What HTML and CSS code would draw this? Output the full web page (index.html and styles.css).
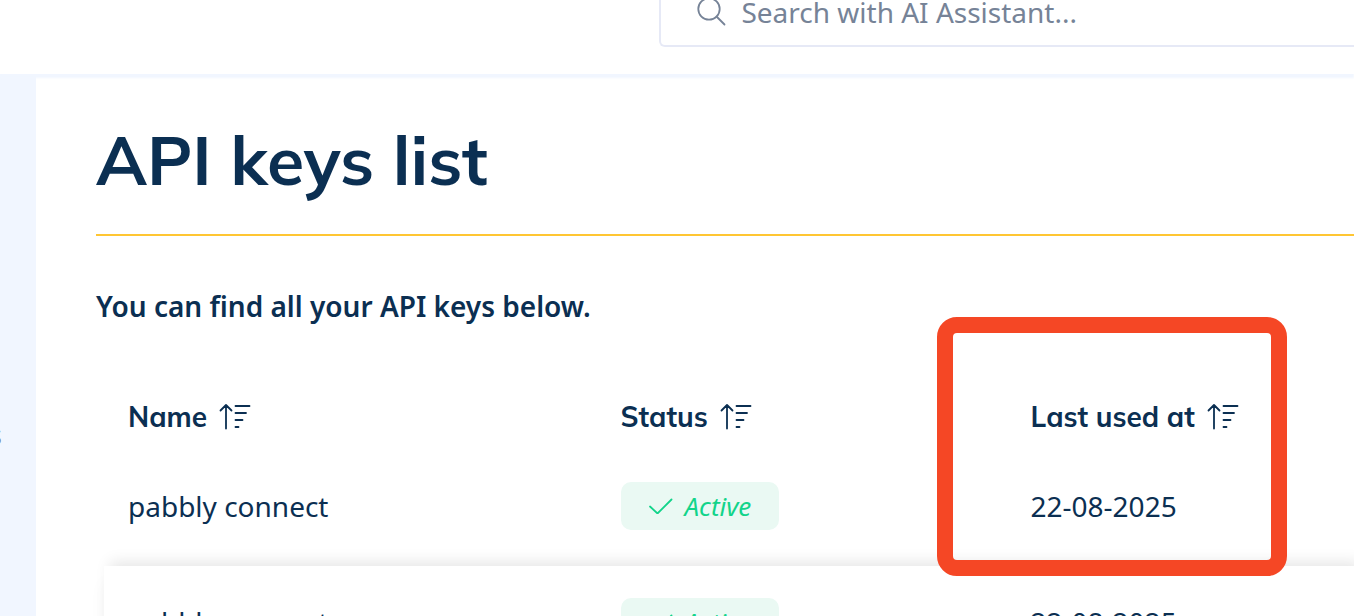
FILE: index.html
```html
<!DOCTYPE html>
<html lang="en">

<head>
    <meta charset="utf-8">
    <title>API keys list</title>
    <link rel="stylesheet" href="styles.css">
</head>

<body>

    <svg class="sprite" aria-hidden="true">
        <symbol id="icon-sort" viewBox="0 0 32 28">
            <path d="M7 2V25.500M1.500 7.500L7 2L12.500 7.500M16.500 3H30.500M16.500 10H27M16.500 17H23.500M16.500 24H19.500" />
        </symbol>
        <symbol id="icon-check" viewBox="0 0 24 16">
            <path d="M1 8.500L8.500 15.500L22.500 1.500" />
        </symbol>
    </svg>

    <header class="topbar">
        <label class="search">
            <svg class="search-icon" viewBox="0 0 30 30" aria-hidden="true">
                <circle cx="12" cy="12" r="10.700" />
                <path d="M19.500 19.500L27.500 27.500" />
            </svg>
            <input class="search-input" type="text" placeholder="Search with AI Assistant..." aria-label="Search">
        </label>
    </header>

    <div class="layout">
        <nav class="sidebar">
            <a class="sidebar-link" href="#">s</a>
        </nav>

        <main class="content">
            <h1 class="title">API keys list</h1>
            <p class="intro">You can find all your API keys below.</p>

            <table class="keys">
                <thead>
                    <tr>
                        <th class="col-name"><button class="sort" type="button">Name <svg class="sort-icon" aria-hidden="true"><use href="#icon-sort" /></svg></button></th>
                        <th class="col-status"><button class="sort" type="button">Status <svg class="sort-icon" aria-hidden="true"><use href="#icon-sort" /></svg></button></th>
                        <th><button class="sort" type="button">Last used at <svg class="sort-icon" aria-hidden="true"><use href="#icon-sort" /></svg></button></th>
                    </tr>
                </thead>
                <tbody>
                    <tr>
                        <td>pabbly connect</td>
                        <td><span class="badge"><svg class="check-icon" aria-hidden="true"><use href="#icon-check" /></svg>Active</span></td>
                        <td>22-08-2025</td>
                    </tr>
                    <tr class="raised">
                        <td>pabbly connect</td>
                        <td><span class="badge"><svg class="check-icon" aria-hidden="true"><use href="#icon-check" /></svg>Active</span></td>
                        <td>22-08-2025</td>
                    </tr>
                </tbody>
            </table>

            <div class="highlight"></div>
        </main>
    </div>

</body>

</html>
```
FILE: styles.css
```css
* {
    box-sizing: border-box;
}

html,
body {
    height: 100%;
}

body {
    display: flex;
    flex-direction: column;
    margin: 0;
    overflow: hidden;
    background: #fff;
    color: #0b2f52;
    font-family: "Noto Sans", sans-serif;
    font-size: 28px;
    line-height: 40px;
}

svg {
    fill: none;
    stroke: currentColor;
    stroke-width: 1.8px;
    stroke-linecap: round;
    stroke-linejoin: round;
}

.sprite {
    display: none;
}

/* top bar */
.topbar {
    position: relative;
    z-index: 1;
    display: flex;
    flex: none;
    justify-content: flex-end;
    align-items: flex-end;
    height: 74px;
    padding-bottom: 27px;
    background: #fff;
    box-shadow: 0 4px 2px #f1f6ff;
}

.search {
    display: flex;
    align-items: center;
    gap: 14px;
    width: 51.3%;
    height: 70px;
    padding-left: 36px;
    border: 2px solid #e6e9f6;
    border-right: 0;
    border-radius: 6px 0 0 6px;
    color: #768397;
}

.search-icon {
    width: 30px;
    height: 30px;
}

.search-input {
    flex: 1;
    min-width: 0;
    padding: 0;
    border: 0;
    outline: 0;
    background: none;
    color: inherit;
    font: inherit;
}

.search-input::placeholder {
    color: #768397;
    opacity: 1;
}

/* page */
.layout {
    display: flex;
    flex: 1;
    min-height: 0;
}

.sidebar {
    display: flex;
    flex: none;
    justify-content: flex-end;
    width: 36px;
    padding: 340px 34px 0 0;
    background: #f1f6ff;
}

.sidebar-link {
    color: #768397;
    text-decoration: none;
}

.content {
    position: relative;
    flex: 1;
    min-width: 0;
    padding: 46px 0 0 60px;
}

.title {
    margin: 0 0 50px;
    padding-bottom: 34px;
    border-bottom: 2px solid #ffc633;
    font-family: Mulish, Lato, sans-serif;
    font-size: 68px;
    font-weight: 700;
    line-height: 80px;
}

.intro {
    margin: 0 0 58px;
    font-weight: 600;
}

/* keys table */
.keys {
    width: 100%;
    padding-left: 8px;
    border-collapse: separate;
    border-spacing: 0 4px;
    table-layout: fixed;
}

.keys th,
.keys td {
    padding: 0 24px;
    text-align: left;
}

.keys th {
    height: 58px;
}

.keys td {
    height: 112px;
}

.col-name {
    width: 39.4%;
}

.col-status {
    width: 32.8%;
}

.sort {
    display: flex;
    align-items: center;
    gap: 12px;
    padding: 0;
    border: 0;
    background: none;
    color: inherit;
    font-family: Mulish, Lato, sans-serif;
    font-size: 28px;
    font-weight: 700;
    line-height: 40px;
    white-space: nowrap;
    cursor: pointer;
}

.sort-icon {
    width: 32px;
    height: 28px;
}

.raised {
    box-shadow: 6px -4px 14px rgba(0, 0, 0, .1), 0 16px 16px rgba(0, 0, 0, .04);
}

.badge {
    display: flex;
    align-items: center;
    gap: 12px;
    width: fit-content;
    height: 48px;
    padding: 0 28px;
    border-radius: 10px;
    background: #eaf9f3;
    color: #12d48a;
    font-size: 26px;
    font-style: italic;
}

.check-icon {
    width: 24px;
    height: 16px;
}

/* marker around the last column */
.highlight {
    position: absolute;
    top: 243px;
    left: 901px;
    width: 350px;
    height: 259px;
    border: 16px solid #f54725;
    border-radius: 20px;
}
```
